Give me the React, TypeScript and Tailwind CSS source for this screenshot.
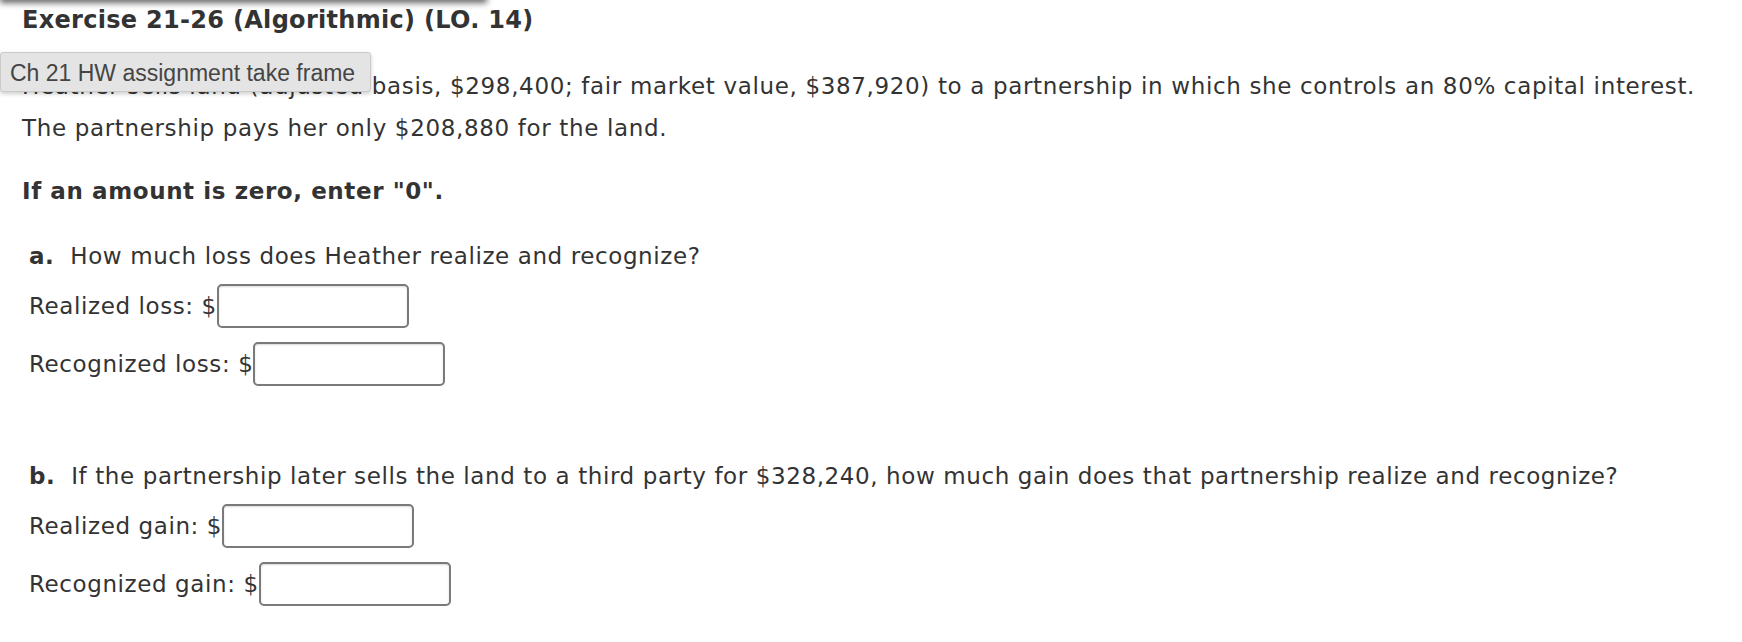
import React from 'react'

const font = { fontFamily: '"DejaVu Sans", Verdana, sans-serif' }

const AnswerRow = ({ label }: { label: string }) => {
  return (
    <div className="flex items-center">
      <span className="text-[23px] leading-[28px] tracking-[0.6px] text-[#333]">{label} $</span>
      <input
        type="text"
        className="h-[44px] w-[192px] rounded-[5px] border-2 border-[#7a7a7a] bg-white shadow-[inset_0_1px_2px_rgba(0,0,0,0.15)] outline-none"
      />
    </div>
  )
}

const App = () => {
  return (
    <div className="relative min-h-[642px] w-full overflow-hidden bg-white" style={font}>
      {/* bottom edge of the bar above, casting a shadow */}
      <div className="absolute -top-[20px] left-0 h-[20px] w-[487px] bg-white shadow-[0_3px_6px_rgba(0,0,0,0.6)]" />

      <div className="pl-[22px] pt-[6px] text-[#333]">
        <h1 className="text-[24px] font-bold leading-[28px] tracking-[0.3px]">Exercise 21-26 (Algorithmic) (LO. 14)</h1>

        <p className="mt-[31px] text-[23px] leading-[42px] tracking-[0.65px]">
          Heather sells land (adjusted basis, $298,400; fair market value, $387,920) to a partnership in which she controls an 80% capital interest.
          <br />
          The partnership pays her only $208,880 for the land.
        </p>

        <p className="mt-[28px] text-[23px] font-bold leading-[28px] tracking-[0.6px]">If an amount is zero, enter "0".</p>

        <div className="pl-[7px] text-[23px] tracking-[0.6px]">
          <p className="mt-[37px] leading-[28px]">
            <span className="font-bold">a.</span>&nbsp; How much loss does Heather realize and recognize?
          </p>
          <div className="mt-[14px] flex flex-col gap-[14px]">
            <AnswerRow label="Realized loss:" />
            <AnswerRow label="Recognized loss:" />
          </div>

          <p className="mt-[76px] leading-[28px]">
            <span className="font-bold">b.</span>&nbsp; If the partnership later sells the land to a third party for $328,240, how much gain does that partnership realize and recognize?
          </p>
          <div className="mt-[14px] flex flex-col gap-[14px]">
            <AnswerRow label="Realized gain:" />
            <AnswerRow label="Recognized gain:" />
          </div>
        </div>
      </div>

      {/* browser tooltip */}
      <div
        className="absolute left-0 top-[52px] flex h-[40px] w-[371px] items-center rounded-[3px] border border-[#cacaca] bg-[#e4e4e4] pl-[9px] pt-[2px] text-[23px] text-[#454545] shadow-[0_2px_4px_rgba(0,0,0,0.2)]"
        style={{ fontFamily: '"Liberation Sans", Arial, sans-serif' }}
      >
        Ch 21 HW assignment take frame
      </div>
    </div>
  )
}

export default App
